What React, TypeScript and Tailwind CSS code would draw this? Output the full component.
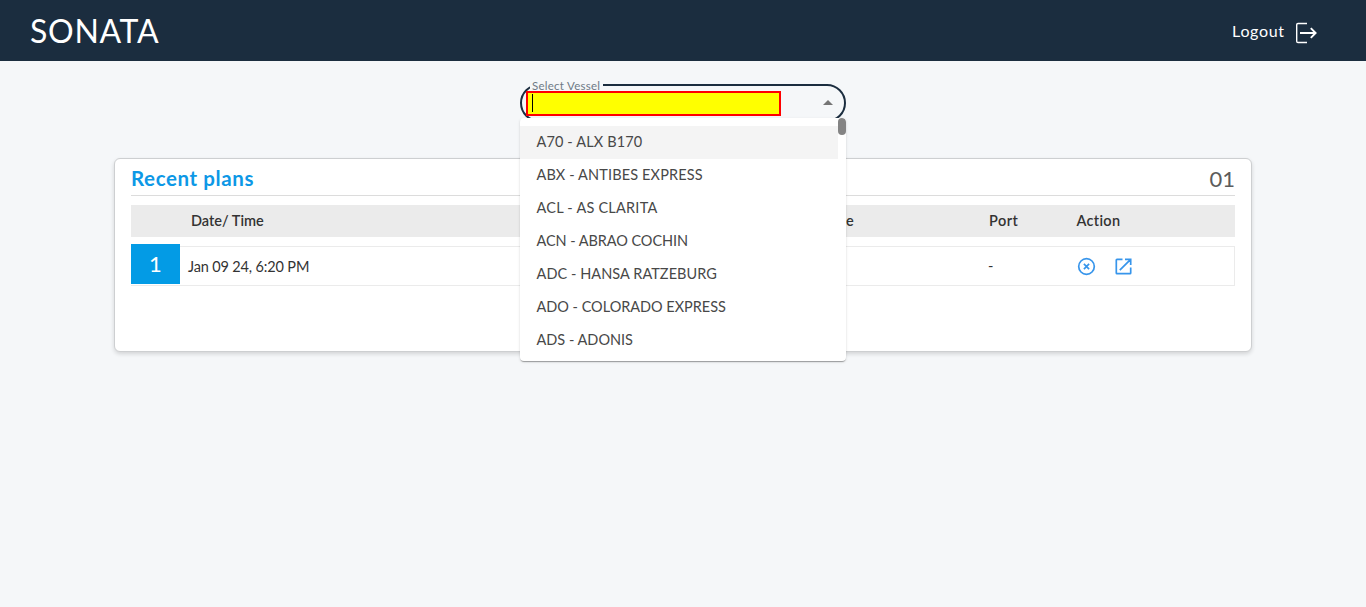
const vessels = [
  { label: 'A70 - ALX B170', spacing: 'tracking-[0.13px]' },
  { label: 'ABX - ANTIBES EXPRESS', spacing: 'tracking-[0.14px]' },
  { label: 'ACL - AS CLARITA', spacing: 'tracking-[0.22px]' },
  { label: 'ACN - ABRAO COCHIN', spacing: 'tracking-[-0.07px]' },
  { label: 'ADC - HANSA RATZEBURG', spacing: 'tracking-[0.06px]' },
  { label: 'ADO - COLORADO EXPRESS', spacing: 'tracking-[-0.02px]' },
  { label: 'ADS - ADONIS', spacing: 'tracking-[0px]' },
];

function Header() {
  return (
    <header className="flex h-[61px] items-center justify-between bg-[#1b2d3f] pl-[30px] pr-[48px] text-white">
      <h1 className="text-[32px] leading-[40px] tracking-[0.7px]">SONATA</h1>
      <button className="flex items-center gap-[11px] pt-1 text-[16px] leading-6">
        <span className="-mt-[3px] -mr-[0.6px] tracking-[0.65px]">Logout</span>
        <svg width="23" height="22" viewBox="0 0 23 22" fill="none" stroke="currentColor">
          <path d="M12 1.5H3Q1.7 1.5 1.7 2.8V19.2Q1.7 20.5 3 20.5H12" strokeWidth="1.4" />
          <path d="M5 11H20.6M15.8 6.2L20.6 11L15.8 15.8" strokeWidth="1.9" />
        </svg>
      </button>
    </header>
  );
}

function VesselSelect() {
  return (
    <div className="relative mx-auto h-[38px] w-[326px]">
      <div className="flex h-full items-center rounded-full border-2 border-[#1b2d3f] pl-1 pr-[11px]">
        <div className="flex h-[25px] w-[255px] items-center border-2 border-[#ff0000] bg-[#ffff00] pl-1">
          <span className="h-[18px] w-px bg-black" />
        </div>
        <svg className="-mt-[2px] ml-auto" width="10" height="5" viewBox="0 0 10 5" fill="#757575">
          <path d="M0 5L5 0L10 5Z" />
        </svg>
      </div>
      <label className="absolute left-[10px] top-[-6px] h-[13px] w-[73px] bg-[#f5f7f9] pl-[2px] text-[11.5px] leading-[15px] tracking-[0.25px] text-[#6f7a86]">
        Select Vessel
      </label>
      <div className="absolute left-0 top-[34px] z-10 h-[243px] w-[326px] overflow-hidden rounded-[4px] bg-white pt-2 shadow-[0_2px_1px_-1px_rgba(0,0,0,0.2),0_1px_1px_0_rgba(0,0,0,0.14),0_1px_3px_0_rgba(0,0,0,0.12)]">
        <ul className="mr-2">
          {vessels.map((v, i) => (
            <li
              key={v.label}
              className={`h-[33px] pl-[16.5px] text-[14.5px] leading-[31px] text-[#484848] ${i === 0 ? 'bg-[#f4f4f4]' : ''}`}
            >
              <span className={v.spacing}>{v.label}</span>
            </li>
          ))}
        </ul>
        <div className="absolute right-0 top-0 h-[17px] w-2 rounded-full bg-[#848484]" />
      </div>
    </div>
  );
}

function RecentPlans() {
  return (
    <section className="mx-auto mt-[36px] h-[194px] w-[1138px] rounded-[6px] border border-[#cdcfd1] bg-white px-4 shadow-[0_2px_4px_rgba(0,0,0,0.14)]">
      <div className="flex h-[37px] items-center justify-between border-b border-[#dcdcdc]">
        <h2 className="pt-px text-[20.5px] font-bold leading-[38px] tracking-[0.6px] text-[#0d98e6]">Recent plans</h2>
        <span className="pt-[3px] text-[22px] leading-8 text-[#5c5c5c]">01</span>
      </div>
      <div className="mt-[9px] grid h-8 grid-cols-[60px_614px_184px_87.5px_1fr] items-center bg-[#ebebeb] text-[14.5px] font-semibold leading-[32px] text-[#333333]">
        <span className="h-8" />
        <span className="h-8">Date/ Time</span>
        <span className="h-8 tracking-[0.4px]">Voyage</span>
        <span className="h-8 tracking-[0.5px]">Port</span>
        <span className="h-8 tracking-[0.3px]">Action</span>
      </div>
      <div className="mt-[9px] grid h-10 grid-cols-[49px_808px_88px_1fr] items-center border border-l-0 border-[#ebebeb] text-[14.5px] text-[#333333]">
        <span className="-mt-[5px] h-10 bg-[#039be5] text-center text-[22px] leading-10 text-white">1</span>
        <span className="pl-2 pt-[2px] tracking-[-0.15px]">Jan 09 24, 6:20 PM</span>
        <span>-</span>
        <span className="flex items-center gap-[19px] pl-[0.5px]">
          <svg width="19" height="19" viewBox="0 0 19 19" fill="none" stroke="#3795eb" strokeWidth="1.7">
            <circle cx="9.5" cy="9.5" r="7.8" />
            <path d="M6.9 6.9L12.1 12.1M12.1 6.9L6.9 12.1" />
          </svg>
          <svg width="17" height="17" viewBox="0 0 17 17" fill="none" stroke="#3795eb" strokeWidth="1.7">
            <path d="M7.5 1.3H2Q1.3 1.3 1.3 2V15Q1.3 15.7 2 15.7H15Q15.7 15.7 15.7 15V9.5M10 1.3H15.7V7M15.4 1.6L4.8 12.2" />
          </svg>
        </span>
      </div>
    </section>
  );
}

export default function App() {
  return (
    <div className="h-[607px] overflow-hidden bg-[#f5f7f9] font-['Lato',sans-serif]">
      <Header />
      <main className="pt-[23px]">
        <VesselSelect />
        <RecentPlans />
      </main>
    </div>
  );
}
